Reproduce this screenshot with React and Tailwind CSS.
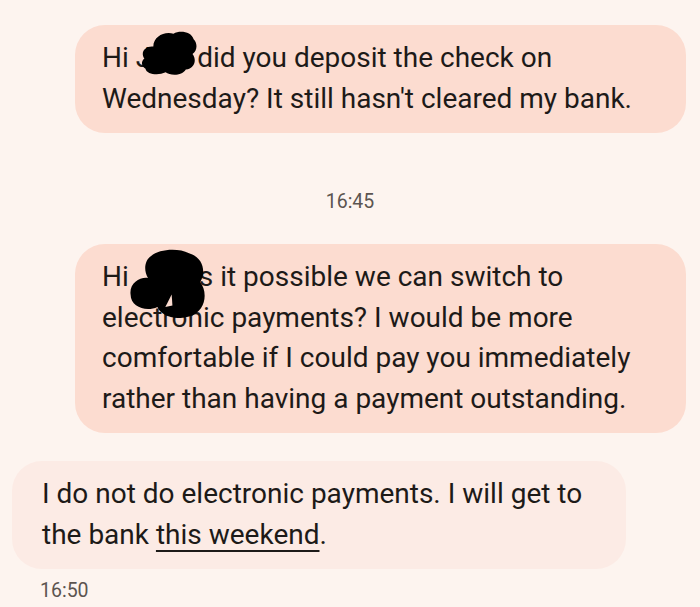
import React from 'react';

const font = { fontFamily: 'Roboto, "Noto Sans", sans-serif' };

// ink scribbles used to hide a name
const Scribble = ({ className, variant }) => (
  <svg className={className} viewBox="0 0 100 100" preserveAspectRatio="none">
    {variant === 'cloud' ? (
      <path
        d="M6 62 C-2 48 8 34 22 36 C22 14 42 2 58 8 C70 0 90 4 94 20 C102 30 100 46 92 52 C100 64 96 84 80 86 C74 100 52 100 44 92 C30 100 10 96 8 84 C0 78 0 68 6 62 Z"
        fill="#000"
      />
    ) : (
      <g fill="#000">
        <path d="M28 10 C38 0 62 -2 76 6 C94 12 98 34 90 48 C100 62 98 90 76 98 C58 104 40 96 36 84 C22 92 2 84 2 66 C0 50 14 40 24 42 C18 30 20 16 28 10 Z" />
        <path d="M54 66 L46 84 L55 82 Z" fill="#fcdcd0" />
      </g>
    )}
  </svg>
);

const Bubble = ({ children, className }) => (
  <div className={`relative text-[28px] leading-[40.5px] text-[#1d1a18] ${className}`}>
    {children}
  </div>
);

export default function App() {
  return (
    <div className="w-[700px] h-[607px] overflow-hidden bg-[#fdf4ef] flex flex-col" style={font}>
      <Bubble className="mt-[25px] ml-[75px] w-[611px] rounded-[30px] bg-[#fcdcd0] pl-[27px] pt-[13px] pb-[14px]">
        Hi J<span className="inline-block w-[46px]" />did you deposit the check on
        <br />
        Wednesday? It still hasn't cleared my bank.
        <Scribble variant="cloud" className="absolute left-[66px] top-[5px] w-[56px] h-[46px]" />
      </Bubble>

      <div className="mt-[55px] text-center text-[19.5px] leading-[28px] text-[#5c5450]">16:45</div>

      <Bubble className="mt-[28px] ml-[75px] w-[611px] rounded-[30px] bg-[#fcdcd0] pl-[27px] pt-[13px] pb-[14px]">
        Hi<span className="inline-block w-[70px]" />s it possible we can switch to
        <br />
        electronic payments? I would be more
        <br />
        comfortable if I could pay you immediately
        <br />
        rather than having a payment outstanding.
        <Scribble variant="mark" className="absolute left-[54px] top-[5px] w-[79px] h-[69px]" />
      </Bubble>

      <Bubble className="mt-[28px] ml-[12px] w-[614px] rounded-[30px] bg-[#fcebe5] pl-[30px] pt-[13px] pb-[14px]">
        I do not do electronic payments. I will get to
        <br />
        the bank <span className="underline decoration-[2px] underline-offset-[6px]">this weekend</span>.
      </Bubble>

      <div className="mt-[8px] ml-[40px] text-[19.5px] leading-[28px] text-[#5c5450]">16:50</div>
    </div>
  );
}
